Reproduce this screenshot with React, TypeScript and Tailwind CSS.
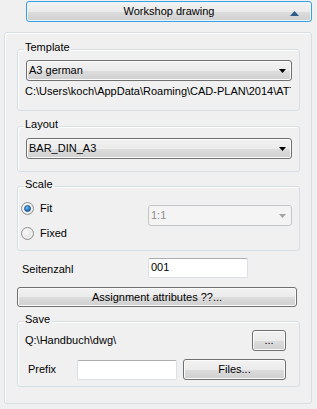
import React from "react";

const btnBg =
  "bg-[linear-gradient(to_bottom,#f2f2f2_0%,#ebebeb_50%,#dddddd_51%,#cfcfcf_100%)]";

function Arrow({ color = "#000" }: { color?: string }) {
  return (
    <svg width="7" height="4" viewBox="0 0 7 4" className="block">
      <polygon points="0,0 7,0 3.5,4" fill={color} />
    </svg>
  );
}

function Select({ text, disabled = false, className = "" }: { text: string; disabled?: boolean; className?: string }) {
  return (
    <div
      className={
        "flex h-[21px] items-center rounded-[3px] border pl-[2px] pr-[5px] " +
        (disabled
          ? "border-[#c3c6c9] bg-[#f4f4f4] text-[#8d8d8d] "
          : "border-[#707070] text-black shadow-[inset_0_0_0_1px_#fbfbfb] " + btnBg + " ") +
        className
      }
    >
      <span className="flex-1 whitespace-nowrap leading-[13px]">{text}</span>
      <Arrow color={disabled ? "#a4a4a4" : "#000"} />
    </div>
  );
}

function Button({ children, className = "" }: { children: React.ReactNode; className?: string }) {
  return (
    <div
      className={
        "flex items-center justify-center rounded-[3px] border border-[#707070] shadow-[inset_0_0_0_1px_#fbfbfb] leading-[13px] " +
        btnBg +
        " " +
        className
      }
    >
      {children}
    </div>
  );
}

function Radio({ checked }: { checked: boolean }) {
  return (
    <svg width="13" height="13" viewBox="0 0 13 13" className="block">
      <defs>
        <radialGradient id="rg" cx="0.4" cy="0.4" r="0.7">
          <stop offset="0" stopColor="#fafafa" />
          <stop offset="1" stopColor="#d8d8d8" />
        </radialGradient>
        <radialGradient id="bg" cx="0.4" cy="0.35" r="0.7">
          <stop offset="0" stopColor="#7cc6f4" />
          <stop offset="0.6" stopColor="#2b7dc8" />
          <stop offset="1" stopColor="#124f93" />
        </radialGradient>
      </defs>
      <circle cx="6.5" cy="6.5" r="6" fill="url(#rg)" stroke="#8f9193" strokeWidth="1" />
      <circle cx="6.5" cy="6.5" r="4.5" fill="none" stroke="#ffffff" strokeOpacity="0.6" strokeWidth="1" />
      {checked && <circle cx="6.5" cy="6.5" r="3" fill="url(#bg)" stroke="#1d4f86" strokeWidth="0.8" />}
    </svg>
  );
}

function Group({
  title,
  className = "",
  children,
}: {
  title: string;
  className?: string;
  children: React.ReactNode;
}) {
  return (
    <fieldset
      className={
        "ml-[12px] w-[283px] rounded-[3px] border border-[#d5dfe5] shadow-[inset_1px_1px_0_#ffffff] " + className
      }
    >
      <legend className="ml-[6px] px-[1px] pb-[4px] leading-[13px]">{title}</legend>
      {children}
    </fieldset>
  );
}

function TextBox({ value = "", className = "" }: { value?: string; className?: string }) {
  return (
    <div
      className={
        "rounded-[2px] border border-[#dbdfe6] border-t-[#abadb3] bg-white pl-[2px] pt-[2px] leading-[13px] " +
        className
      }
    >
      {value}
    </div>
  );
}

export default function App() {
  return (
    <div
      className="h-[409px] w-[317px] overflow-hidden bg-[#f0f0f0] text-[11px] leading-[13px] text-black"
      style={{ fontFamily: '"Liberation Sans", Arial, sans-serif' }}
    >
      {/* Header button */}
      <div
        className={
          "relative ml-[26px] mt-[1px] flex h-[21px] w-[286px] items-center justify-center rounded-[3px] border border-[#3aa0e0] shadow-[inset_0_0_0_1px_#e8f5fc] " +
          btnBg
        }
      >
        <span className="leading-[13px]">Workshop drawing</span>
        <svg width="9" height="5" viewBox="0 0 9 5" className="absolute right-[12px] top-[9px]">
          <polygon points="4.5,0 9,5 0,5" fill="#2c5b8c" />
        </svg>
      </div>

      {/* Outer panel */}
      <div className="ml-[4px] mt-[10px] w-[308px] rounded-[3px] border border-[#d5dfe5] pb-[16px] shadow-[inset_1px_1px_0_#ffffff]">
        <Group title="Template" className="mt-[8px] pb-[12px]">
          <Select text="A3 german" className="ml-[8px] mt-[2px] w-[266px]" />
          <div className="ml-[7px] mt-[4px] w-[266px] overflow-hidden whitespace-nowrap leading-[13px]">
            C:\Users\koch\AppData\Roaming\CAD-PLAN\2014\ATTRIBUTE
          </div>
        </Group>

        <Group title="Layout" className="mt-[7px] pb-[12px]">
          <Select text="BAR_DIN_A3" className="ml-[8px] mt-[3px] w-[266px]" />
        </Group>

        <Group title="Scale" className="mt-[6px] pb-[7px]">
          <div className="flex">
            <div className="ml-[3px] flex flex-col gap-[5px] pt-[3px]">
              <div className="flex h-[20px] items-center gap-[6px]">
                <Radio checked />
                <span>Fit</span>
              </div>
              <div className="flex h-[20px] items-center gap-[6px]">
                <Radio checked={false} />
                <span>Fixed</span>
              </div>
            </div>
            <Select text="1:1" disabled className="ml-auto mr-[7px] mt-[10px] w-[144px]" />
          </div>
        </Group>

        <div className="mt-[7px] flex">
          <div className="ml-[17px] w-[126px] pt-[5px]">Seitenzahl</div>
          <TextBox value="001" className="h-[20px] w-[100px]" />
        </div>

        <Button className="ml-[12px] mt-[9px] h-[20px] w-[280px]">Assignment attributes ??...</Button>

        <Group title="Save" className="mt-[6px] pb-[6px]">
          <div className="flex h-[21px] items-center">
            <span className="ml-[7px] flex-1">Q:\Handbuch\dwg\</span>
            <Button className="mr-[13px] h-[21px] w-[34px]">...</Button>
          </div>
          <div className="mt-[8px] flex h-[21px] items-center">
            <span className="ml-[10px] w-[49px]">Prefix</span>
            <TextBox className="mt-[1px] h-[20px] w-[100px]" />
            <Button className="ml-[6px] h-[21px] w-[103px]">Files...</Button>
          </div>
        </Group>
      </div>
    </div>
  );
}
